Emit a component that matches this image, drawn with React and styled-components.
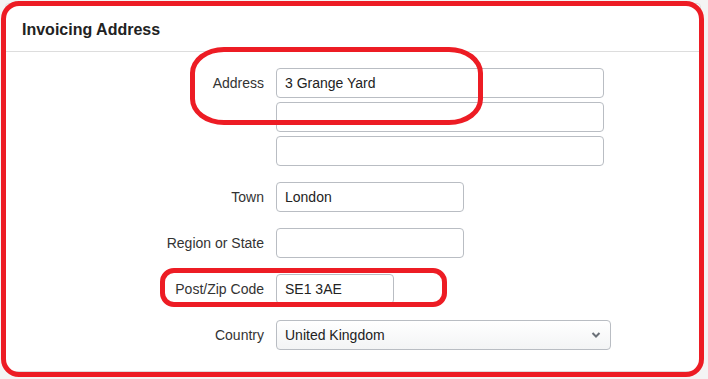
import React from "react";
import styled, { createGlobalStyle } from "styled-components";

const Global = createGlobalStyle`
  html, body { margin: 0; padding: 0; background: #fff; }
  body { font-family: "Liberation Sans", Arial, sans-serif; color: #333; }
`;

const Page = styled.div`
  position: relative;
  width: 708px;
  height: 379px;
  overflow: hidden;
  background: #f4f4f4;
`;

const Panel = styled.section`
  position: absolute;
  left: 5px;
  top: 3px;
  width: 696px;
  height: 369px;
  box-sizing: border-box;
  background: #fff;
  border: 1px solid #ddd;
  border-radius: 4px;
  display: flex;
  flex-direction: column;
`;

const Heading = styled.h3`
  margin: 0;
  height: 48px;
  box-sizing: border-box;
  padding-left: 16px;
  display: flex;
  align-items: center;
  padding-top: 4px;
  font-size: 16px;
  font-weight: bold;
  color: #222;
  border-bottom: 1px solid #ddd;
`;

const Form = styled.div`
  padding-top: 16px;
  display: grid;
  grid-template-columns: 258px auto;
  column-gap: 12px;
  row-gap: 16px;
  align-items: start;
`;

const Label = styled.label`
  font-size: 14px;
  color: #333;
  text-align: right;
  height: 30px;
  line-height: 30px;
`;

const Stack = styled.div`
  display: flex;
  flex-direction: column;
  gap: 4px;
`;

const Input = styled.input`
  box-sizing: border-box;
  width: ${(p) => p.$w}px;
  height: 30px;
  border: 1px solid #b9bdc3;
  border-radius: 4px;
  padding: 0 8px;
  font-family: "Liberation Sans", Arial, sans-serif;
  font-size: 14px;
  color: #222;
  background: #fff;
  outline: none;
`;

const SelectWrap = styled.div`
  position: relative;
  width: 335px;
  height: 30px;
`;

const Select = styled.select`
  appearance: none;
  -webkit-appearance: none;
  box-sizing: border-box;
  width: 100%;
  height: 30px;
  border: 1px solid #b9bdc3;
  border-radius: 4px;
  padding: 0 8px;
  font-family: "Liberation Sans", Arial, sans-serif;
  font-size: 14px;
  color: #222;
  background: linear-gradient(#ffffff, #f3f4f5);
  outline: none;
`;

const Chevron = styled.svg`
  position: absolute;
  right: 10px;
  top: 11px;
  pointer-events: none;
`;

const RedFrame = styled.div`
  position: absolute;
  left: 1px;
  top: 1px;
  width: 703px;
  height: 376px;
  box-sizing: border-box;
  border: 5px solid #ed1c24;
  border-radius: 18px;
  pointer-events: none;
`;

const Circle = styled.div`
  position: absolute;
  left: ${(p) => p.$x}px;
  top: ${(p) => p.$y}px;
  width: ${(p) => p.$w}px;
  height: ${(p) => p.$h}px;
  box-sizing: border-box;
  border: 5px solid #ed1c24;
  border-radius: ${(p) => p.$r};
  pointer-events: none;
`;

export default function App() {
  return (
    <Page>
      <Global />
      <Panel>
        <Heading>Invoicing Address</Heading>
        <Form>
          <Label>Address</Label>
          <Stack>
            <Input $w={328} defaultValue="3 Grange Yard" />
            <Input $w={328} defaultValue="" />
            <Input $w={328} defaultValue="" />
          </Stack>
          <Label>Town</Label>
          <Input $w={188} defaultValue="London" />
          <Label>Region or State</Label>
          <Input $w={188} defaultValue="" />
          <Label>Post/Zip Code</Label>
          <Input $w={118} defaultValue="SE1 3AE" />
          <Label>Country</Label>
          <SelectWrap>
            <Select defaultValue="United Kingdom">
              <option>United Kingdom</option>
            </Select>
            <Chevron width="10" height="8" viewBox="0 0 10 8">
              <path d="M1.5 2 L5 5.5 L8.5 2" fill="none" stroke="#6b7178" strokeWidth="2" />
            </Chevron>
          </SelectWrap>
        </Form>
      </Panel>
      <RedFrame />
      <Circle $x={190} $y={47} $w={293} $h={78} $r="34px / 26px" />
      <Circle $x={160} $y={268} $w={287} $h={39} $r="14px" />
    </Page>
  );
}
